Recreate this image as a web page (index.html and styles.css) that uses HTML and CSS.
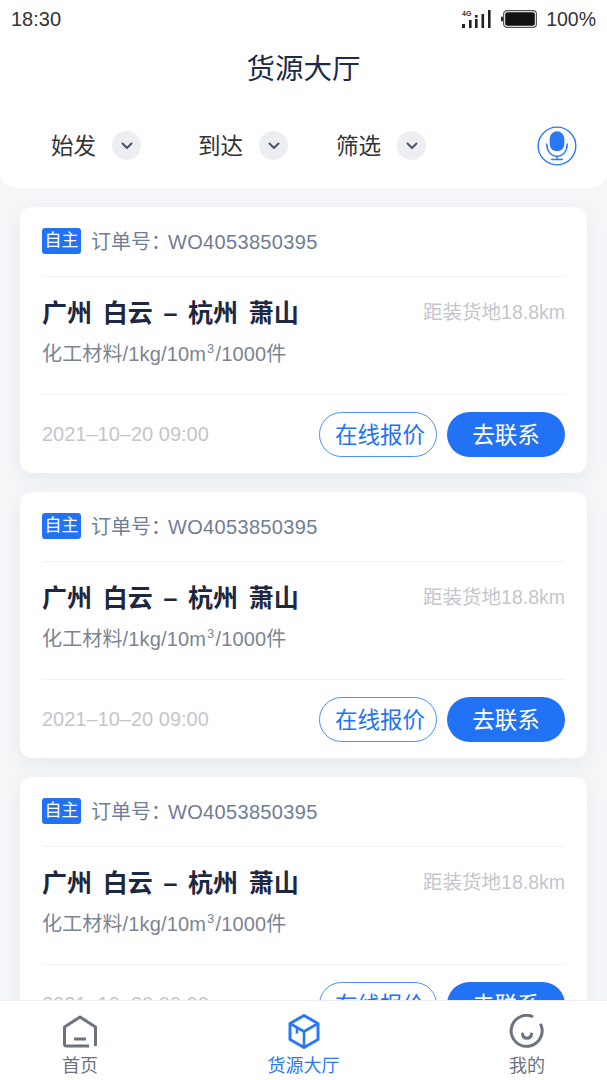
FILE: index.html
```html
<!DOCTYPE html>
<html lang="zh-CN">
<head>
    <meta charset="UTF-8">
    <meta name="viewport" content="width=device-width, initial-scale=1.0">
    <title>货源大厅</title>
    <link rel="stylesheet" href="styles.css">
</head>
<body>
    <div class="top-panel">
        <div class="status-bar">
            <span class="status-time">18:30</span>
            <div class="status-right">
                <svg class="signal" width="30" height="20" viewBox="0 0 30 20">
                    <text x="0" y="7" class="signal-label">4G</text>
                    <rect x="0" y="15" width="3" height="4" fill="#222"/>
                    <rect x="7" y="11" width="2.6" height="8" fill="#222"/>
                    <rect x="13" y="6" width="2.6" height="2.6" fill="#222"/>
                    <rect x="13" y="10" width="2.6" height="9" fill="#222"/>
                    <rect x="19.5" y="5" width="2.6" height="14" fill="#222"/>
                    <rect x="26" y="1" width="2.6" height="18" fill="#222"/>
                </svg>
                <svg class="battery" width="36" height="20" viewBox="0 0 36 20">
                    <rect x="0" y="7.5" width="2" height="5" rx="1" fill="#222"/>
                    <rect x="2.6" y="1.6" width="32.8" height="16.8" rx="3.4" fill="none" stroke="#555" stroke-width="1.2"/>
                    <rect x="4.2" y="3.2" width="29.6" height="13.6" rx="2" fill="#111"/>
                </svg>
                <span class="status-battery">100%</span>
            </div>
        </div>
        <h1 class="page-title">货源大厅</h1>
        <div class="filter-row">
            <div class="filter filter-start">
                <span class="filter-name">始发</span>
                <i class="chevron"><svg width="12" height="8" viewBox="0 0 12 8"><path d="M1.5 1.500 6 6l4.500-4.500" fill="none" stroke="#4a5568" stroke-width="2" stroke-linecap="round" stroke-linejoin="round"/></svg></i>
            </div>
            <div class="filter filter-end">
                <span class="filter-name">到达</span>
                <i class="chevron"><svg width="12" height="8" viewBox="0 0 12 8"><path d="M1.5 1.500 6 6l4.500-4.500" fill="none" stroke="#4a5568" stroke-width="2" stroke-linecap="round" stroke-linejoin="round"/></svg></i>
            </div>
            <div class="filter filter-more">
                <span class="filter-name">筛选</span>
                <i class="chevron"><svg width="12" height="8" viewBox="0 0 12 8"><path d="M1.5 1.500 6 6l4.500-4.500" fill="none" stroke="#4a5568" stroke-width="2" stroke-linecap="round" stroke-linejoin="round"/></svg></i>
            </div>
            <svg class="mic" width="40" height="40" viewBox="0 0 41 41">
                <circle cx="20.5" cy="20.5" r="19.3" fill="#fff" stroke="#2a78f6" stroke-width="1.4"/>
                <rect x="13" y="5.500" width="15" height="20.500" rx="7.500" fill="#2a78f6"/>
                <path d="M10 18.500c0 7.500 4.500 12.500 10.500 12.500S31 26 31 18.500M20.500 31v3M15 34.300h11" fill="none" stroke="#2a78f6" stroke-width="1.500" stroke-linecap="round"/>
            </svg>
        </div>
    </div>

    <div class="order-list">
        <div class="order-card">
            <div class="order-head">
                <span class="tag">自主</span>
                <span class="order-no">订单号：<span class="order-code">WO4053850395</span></span>
            </div>
            <div class="order-body">
                <div class="route-line">
                    <span class="route">广州 白云 – 杭州 萧山</span>
                    <span class="distance">距装货地18.8km</span>
                </div>
                <p class="goods">化工材料/1kg/10m<sup class="unit-power">3</sup>/1000件</p>
            </div>
            <div class="order-foot">
                <span class="date">2021–10–20 09:00</span>
                <div class="actions">
                    <button class="btn btn-outline"><span class="btn-text">在线报价</span></button>
                    <button class="btn btn-solid"><span class="btn-text">去联系</span></button>
                </div>
            </div>
        </div>
        <div class="order-card">
            <div class="order-head">
                <span class="tag">自主</span>
                <span class="order-no">订单号：<span class="order-code">WO4053850395</span></span>
            </div>
            <div class="order-body">
                <div class="route-line">
                    <span class="route">广州 白云 – 杭州 萧山</span>
                    <span class="distance">距装货地18.8km</span>
                </div>
                <p class="goods">化工材料/1kg/10m<sup class="unit-power">3</sup>/1000件</p>
            </div>
            <div class="order-foot">
                <span class="date">2021–10–20 09:00</span>
                <div class="actions">
                    <button class="btn btn-outline"><span class="btn-text">在线报价</span></button>
                    <button class="btn btn-solid"><span class="btn-text">去联系</span></button>
                </div>
            </div>
        </div>
        <div class="order-card">
            <div class="order-head">
                <span class="tag">自主</span>
                <span class="order-no">订单号：<span class="order-code">WO4053850395</span></span>
            </div>
            <div class="order-body">
                <div class="route-line">
                    <span class="route">广州 白云 – 杭州 萧山</span>
                    <span class="distance">距装货地18.8km</span>
                </div>
                <p class="goods">化工材料/1kg/10m<sup class="unit-power">3</sup>/1000件</p>
            </div>
            <div class="order-foot">
                <span class="date">2021–10–20 09:00</span>
                <div class="actions">
                    <button class="btn btn-outline"><span class="btn-text">在线报价</span></button>
                    <button class="btn btn-solid"><span class="btn-text">去联系</span></button>
                </div>
            </div>
        </div>
    </div>

    <div class="tab-bar">
        <div class="tab">
            <svg width="36" height="36" viewBox="0 0 36 36">
                <path d="M27 32H4.500a2 2 0 0 1-2-2V13L18 3l15.500 10v19" fill="none" stroke="#6b7280" stroke-width="3" stroke-linejoin="round"/>
                <path d="M12 25h12" stroke="#6b7280" stroke-width="3"/>
            </svg>
            <span>首页</span>
        </div>
        <div class="tab tab-active">
            <svg width="36" height="36" viewBox="0 0 36 36">
                <path d="M18 1.500 32 9.500v16l-14 8-14-8v-16z" fill="none" stroke="#2a78f6" stroke-width="3" stroke-linejoin="round"/>
                <path d="M4 9.500 18 17.500l14-8M18 17.500v16M11 13.500v6" fill="none" stroke="#2a78f6" stroke-width="2.600" stroke-linejoin="round"/>
            </svg>
            <span>货源大厅</span>
        </div>
        <div class="tab">
            <svg width="36" height="36" viewBox="0 0 36 36">
                <path d="M23 2.300A15.500 15.500 0 1 0 32 11" fill="none" stroke="#6b7280" stroke-width="3" stroke-linecap="round"/>
                <path d="M13.500 20c.5 5.500 8.500 5.500 9 0" fill="none" stroke="#6b7280" stroke-width="3" stroke-linecap="round"/>
            </svg>
            <span>我的</span>
        </div>
    </div>
</body>
</html>
```

FILE: styles.css
```css
* {
    box-sizing: border-box;
}

body {
    font-family: "Liberation Sans", "Noto Sans CJK SC", sans-serif;
    margin: 0;
    padding: 0;
    height: 100vh;
    display: flex;
    flex-direction: column;
    overflow: hidden;
    background-color: #f4f6f8;
}

.top-panel {
    height: 188px;
    flex-shrink: 0;
    background-color: #fff;
    border-radius: 0 0 16px 16px;
}

.status-bar {
    height: 38px;
    padding: 0 11px;
    display: flex;
    justify-content: space-between;
    align-items: center;
    font-size: 20px;
    color: #333;
}

.status-right {
    display: flex;
    align-items: center;
    gap: 9px;
}

.status-battery {
    font-size: 19.5px;
}

.signal-label {
    font-size: 7px;
    font-weight: bold;
    fill: #333;
}

.page-title {
    margin: 13px 0 0;
    height: 36px;
    line-height: 36px;
    text-align: center;
    font-size: 28.5px;
    font-weight: normal;
    color: #1f2a44;
}

.filter-row {
    margin-top: 38px;
    padding: 0 30px 0 51px;
    display: flex;
    align-items: center;
    height: 41px;
}

.filter {
    display: flex;
    align-items: center;
    gap: 16px;
    font-size: 22.5px;
    color: #333;
}

.filter-name {
    padding-bottom: 4px;
}

.filter-end {
    margin-left: 57px;
}

.filter-more {
    margin-left: 48px;
}

.chevron {
    width: 29px;
    height: 29px;
    border-radius: 50%;
    background-color: #eceef1;
    display: flex;
    justify-content: center;
    align-items: center;
}

.mic {
    margin-left: auto;
}

.order-list {
    flex: 1;
    min-height: 0;
    overflow: hidden;
    padding: 19px 20px 0;
    display: flex;
    flex-direction: column;
    gap: 19px;
}

.order-card {
    flex-shrink: 0;
    height: 266px;
    padding: 0 22px;
    background-color: #fff;
    border-radius: 12px;
    box-shadow: 0 6px 18px rgba(90, 110, 140, 0.08);
}

.order-head {
    height: 70px;
    padding-top: 21px;
    display: flex;
    align-items: flex-start;
    gap: 10px;
    border-bottom: 1px solid #f1f2f4;
}

.tag {
    width: 39px;
    height: 26px;
    line-height: 26px;
    text-align: center;
    border-radius: 3px;
    font-size: 17px;
    color: #fff;
    background-color: #2272f6;
}

.order-no {
    line-height: 28px;
    font-size: 20px;
    color: #6f7d95;
}

.order-code {
    margin-left: -3px;
    letter-spacing: 0.33px;
}

.order-body {
    height: 118px;
    border-bottom: 1px solid #f1f2f4;
}

.route-line {
    padding-top: 19px;
    display: flex;
    justify-content: space-between;
    align-items: center;
}

.route {
    font-size: 25px;
    line-height: 34px;
    font-weight: bold;
    word-spacing: 3.75px;
    color: #1d2840;
}

.distance {
    padding-bottom: 5px;
    font-size: 19.5px;
    color: #c3c6cc;
}

.goods {
    margin: 9px 0 0;
    font-size: 20px;
    line-height: 30px;
    letter-spacing: 0.15px;
    color: #7b8494;
}

.unit-power {
    padding: 0 1px;
    font-size: 13px;
    line-height: 0;
}

.order-foot {
    padding-top: 17px;
    display: flex;
    justify-content: space-between;
    align-items: center;
}

.date {
    font-size: 20px;
    color: #c3c6cc;
}

.actions {
    display: flex;
    gap: 10px;
}

.btn {
    width: 118px;
    height: 45px;
    padding: 0;
    border-radius: 23px;
    font-family: inherit;
    font-size: 22.5px;
}

.btn-text {
    display: block;
    padding-bottom: 4px;
}

.btn-outline {
    padding-left: 4px;
    background-color: #fff;
    border: 1px solid #4d8ff8;
    color: #2272f6;
}

.btn-solid {
    background-color: #2272f6;
    border: none;
    color: #fff;
}

.tab-bar {
    height: 80px;
    flex-shrink: 0;
    position: relative;
    background-color: #fff;
    border-top: 1px solid #eceef1;
    display: grid;
    grid-template-columns: 160px 1fr 160px;
}

.tab {
    padding-top: 13px;
    display: flex;
    flex-direction: column;
    align-items: center;
    gap: 3px;
    font-size: 18px;
    line-height: 26px;
    color: #6b7280;
}

.tab-active {
    color: #2a78f6;
}
```
